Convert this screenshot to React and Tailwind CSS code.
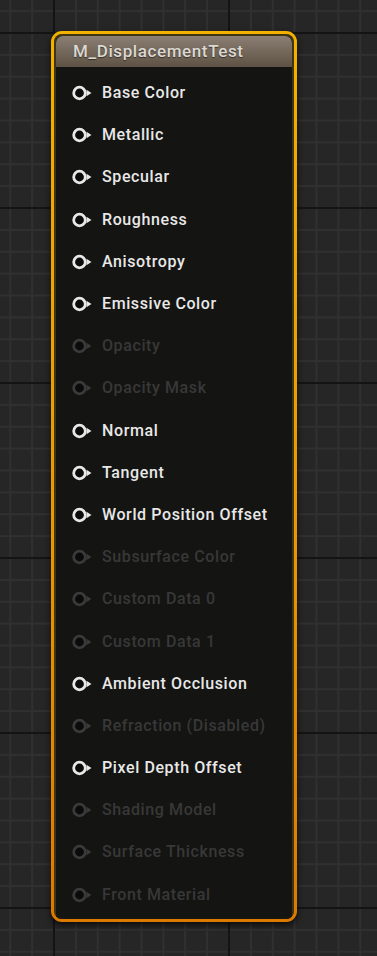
import React from "react";

const pins = [
  ["Base Color", true],
  ["Metallic", true],
  ["Specular", true],
  ["Roughness", true],
  ["Anisotropy", true],
  ["Emissive Color", true],
  ["Opacity", false],
  ["Opacity Mask", false],
  ["Normal", true],
  ["Tangent", true],
  ["World Position Offset", true],
  ["Subsurface Color", false],
  ["Custom Data 0", false],
  ["Custom Data 1", false],
  ["Ambient Occlusion", true],
  ["Refraction (Disabled)", false],
  ["Pixel Depth Offset", true],
  ["Shading Model", false],
  ["Surface Thickness", false],
  ["Front Material", false],
];

function PinIcon({ active }) {
  const stroke = active ? "#e8e8e8" : "#3a3a3a";
  return (
    <svg width="21" height="16" viewBox="0 0 21 16" className="shrink-0">
      <circle cx="7.5" cy="8" r="5.8" fill="#0b0b0b" stroke={stroke} strokeWidth="2.8" />
      <path d="M14.5 4.8 L19.5 8 L14.5 11.2 Z" fill={stroke} />
    </svg>
  );
}

export default function App() {
  return (
    <div className="w-[377px] h-[956px] overflow-hidden bg-[#262626] bg-[linear-gradient(to_right,#141414_2px,transparent_2px),linear-gradient(to_bottom,#141414_2px,transparent_2px),linear-gradient(to_right,#303030_2px,transparent_2px),linear-gradient(to_bottom,#303030_2px,transparent_2px)] bg-[size:175px_175px,175px_175px,21.875px_21.875px,21.875px_21.875px] bg-[position:53px_32px,53px_32px,53px_32px,53px_32px] pt-[31px] pl-[51px] font-['Roboto',sans-serif]">
      <div className="w-[246px] h-[891px] rounded-[11px] p-[3px] bg-[linear-gradient(to_bottom,#f2b200,#e79600_60%,#dc7a00)] shadow-[0_3px_6px_rgba(0,0,0,0.7)]">
        <div className="h-full rounded-[8px] p-[2px] bg-[#15140f] shadow-[inset_0_0_0_2px_rgba(120,90,20,0.45)] overflow-hidden">
          <div className="h-[31px] rounded-t-[7px] bg-[linear-gradient(to_bottom,#8a7f72,#5d5244)] pl-[17px] flex items-center">
            <span className="text-[17px] font-medium text-[#dcd8d2] leading-none tracking-[0.6px] [text-shadow:0_1px_1px_rgba(0,0,0,0.5)]">
              M_DisplacementTest
            </span>
          </div>
          <div className="pt-[5px] bg-[#141413]/90 h-full">
            {pins.map(([label, active]) => (
              <div key={label} className="h-[42.2px] flex items-center pl-[16px] gap-[9px]">
                <PinIcon active={active} />
                <span
                  className={
                    active
                      ? "text-[16px] font-medium text-[#e8e8e8] leading-none whitespace-nowrap tracking-[0.6px]"
                      : "text-[16px] font-medium text-[#383838] leading-none whitespace-nowrap tracking-[0.6px]"
                  }
                >
                  {label}
                </span>
              </div>
            ))}
          </div>
        </div>
      </div>
    </div>
  );
}
